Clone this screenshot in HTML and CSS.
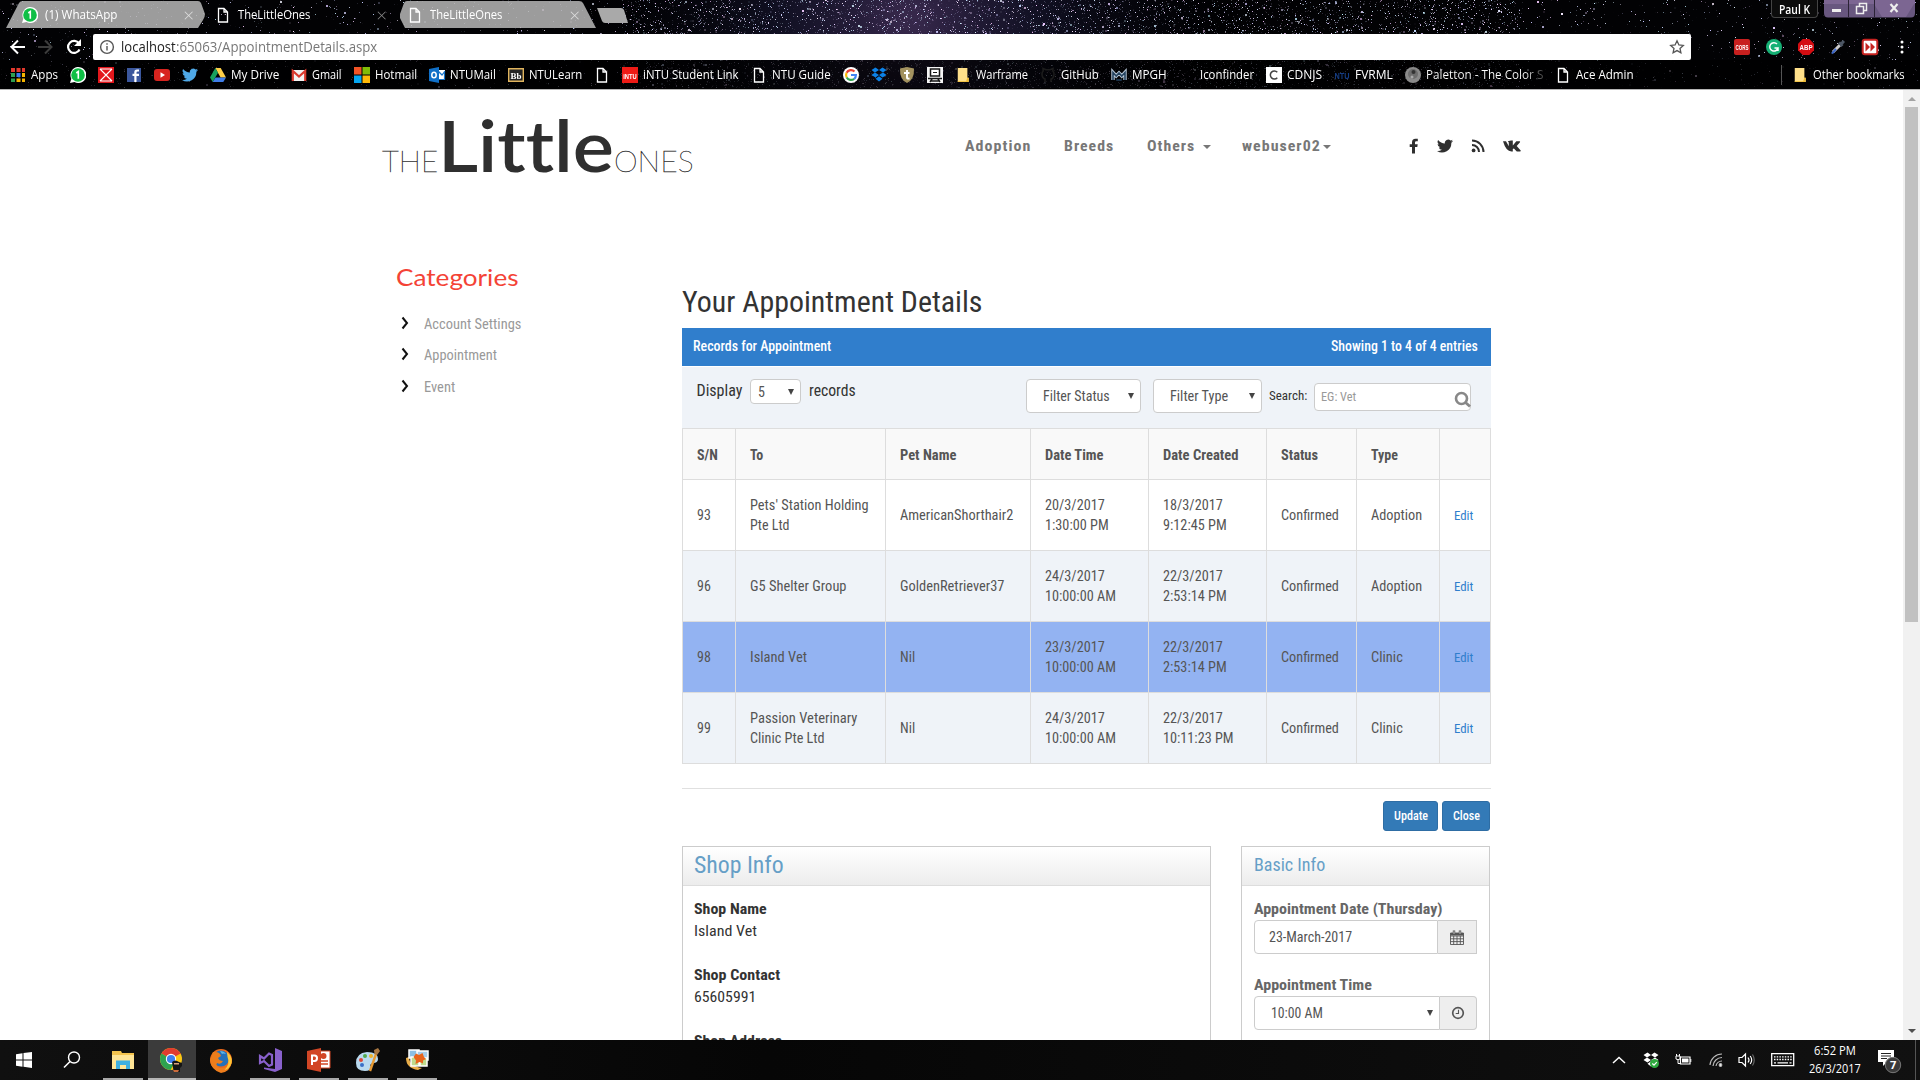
FILE: index.html
```html
<!DOCTYPE html>
<html lang="en">
<head>
<meta charset="utf-8">
<title>TheLittleOnes</title>
<link rel="stylesheet" href="styles.css">
</head>
<body>
<svg class="defs" width="0" height="0">
  <symbol id="file" viewBox="0 0 16 16"><path d="M3.500 1.500h5.500l3.500 3.500v10h-9zM9 1.500v3.500h3.500" fill="none" stroke="#fff" stroke-width="1.300"/></symbol>
  <symbol id="wa" viewBox="0 0 16 16"><path d="M0 16l1.300-4.300A8 8 0 1 1 4.500 15z" fill="#fff"/><circle cx="8" cy="8" r="6.800" fill="#0fbf45"/><path d="M6.300 6l2-1.500v7.200" fill="none" stroke="#fff" stroke-width="1.600"/></symbol>
  <symbol id="folder" viewBox="0 0 16 16"><path d="M2 0h11v11h1.500v5H2z" fill="#ffe08a"/><path d="M2 15h9.500l1.500-4h1.500v5H2z" fill="#f1bd35"/></symbol>
  <symbol id="dropbox" viewBox="0 0 16 16"><path d="M4.500.5L8 3 4 5.500.5 3zM11.500.5L8 3l4 2.500L15.500 3zM.5 8L4 5.500 8 8l-3.500 2.500zM15.500 8L12 5.500 8 8l3.500 2.500zM4.500 11.700L8 9.200l3.500 2.500L8 14.500z"/></symbol>
  <symbol id="twitter" viewBox="0 0 24 24"><path d="M24 4.600a10 10 0 0 1-2.800.8 5 5 0 0 0 2.200-2.700c-1 .6-2 1-3.100 1.200a4.900 4.900 0 0 0-8.400 4.500A14 14 0 0 1 1.700 3.100a4.900 4.900 0 0 0 1.500 6.600c-.8 0-1.600-.2-2.200-.6a4.900 4.900 0 0 0 3.900 4.900c-.7.200-1.500.2-2.200.1a4.900 4.900 0 0 0 4.600 3.400A9.900 9.900 0 0 1 0 19.500 14 14 0 0 0 21.500 7.100c1-.7 1.800-1.600 2.500-2.500z"/></symbol>
</svg>

<header class="chrome">
  <canvas class="stars" id="stars" width="1920" height="88"></canvas>
  <div class="tabs">
    <div class="tab t1">
      <svg class="shape" viewBox="0 0 200 28"><path d="M0 28L13 3Q14 1 17 1H192Q194 1 195 3L199 14Q199 17 197 20L192 28z"/></svg>
      <svg class="ico" width="16" height="16"><use href="#wa"/></svg><span class="ui" data-w="72">(1) WhatsApp</span><b>×</b>
    </div>
    <div class="tab t2">
      <svg class="ico" width="16" height="16"><use href="#file"/></svg><span class="ui" data-w="72">TheLittleOnes</span><b>×</b>
    </div>
    <div class="tab t3">
      <svg class="shape" viewBox="0 0 200 28"><path d="M6 28L1 18V14L5 3Q6 1 8 1H180Q183 1 184 3L197 28z"/></svg>
      <svg class="ico" width="16" height="16"><use href="#file"/></svg><span class="ui" data-w="72">TheLittleOnes</span><b>×</b>
    </div>
    <svg class="newtab" width="34" height="16"><path d="M1 0H25Q27 0 28 2L32 15H9Q7 15 6 13z"/></svg>
    <div class="winctl">
      <div class="user"><span class="ui" data-w="31">Paul K</span></div>
      <svg width="91" height="18" viewBox="0 0 91 18"><path d="M0 0H91V13Q91 17.500 87 17.500H4Q0 17.500 0 13z" fill="#68577f"/><path d="M0 0h91v4H0zM50 4h40l-8 13H58z" fill="#8d72a2" opacity=".55"/><path d="M24.500 0v17M50.500 0v17" stroke="#2b2336"/><path d="M8 10.500h9" stroke="#eee" stroke-width="3"/><path d="M32.500 6.500h7v7h-7zM35.500 6V3.500h7v7H40" fill="none" stroke="#eee" stroke-width="1.500"/><path d="M66.500 4l7 8M73.500 4l-7 8" stroke="#eee" stroke-width="2.200"/></svg>
    </div>
  </div>
  <div class="toolbar">
    <svg class="nav" width="84" height="26" viewBox="0 0 84 26"><g fill="none" stroke-width="2"><path d="M25 13H12M18 6.500L11.500 13 18 19.500" stroke="#fff"/><path d="M38 13H51M45 6.500L51.500 13 45 19.500" stroke="#3c3c3c"/><path d="M79 9.500A6 6 0 1 0 79.500 15.500" stroke="#fff" stroke-width="2.200"/></g><path d="M81 5v7h-7z" fill="#fff"/></svg>
    <div class="omni">
      <svg width="16" height="16" viewBox="0 0 16 16" fill="none" stroke="#555" stroke-width="1.400"><circle cx="8" cy="8" r="6.400"/><path d="M8 7v4.500M8 4.200v1.500"/></svg>
      <span class="ui host" data-w="55">localhost</span><span class="ui path" data-w="201">:65063/AppointmentDetails.aspx</span>
      <svg class="star" width="16" height="16" viewBox="0 0 16 16"><path d="M8 1.800l1.900 4.100 4.400.5-3.300 3 .9 4.400L8 11.600l-3.900 2.200.9-4.400-3.300-3 4.400-.5z" fill="none" stroke="#555" stroke-width="1.300"/></svg>
    </div>
    <div class="exts">
      <svg width="16" height="16"><rect width="16" height="16" rx="2" fill="#c8201f"/><text x="1.500" y="11" class="cors" textLength="13" lengthAdjust="spacingAndGlyphs">CORS</text></svg>
      <svg width="16" height="16"><circle cx="8" cy="8" r="8" fill="#15b074"/><path d="M11 5A4.200 4.200 0 1 0 12 9H8.500M12 9v3" fill="none" stroke="#fff" stroke-width="1.500"/></svg>
      <svg width="16" height="16"><path d="M4.700 0h6.600L16 4.700v6.600L11.300 16H4.700L0 11.300V4.700z" fill="#d40d12"/><text x="1.500" y="10.800" class="cors" textLength="13" lengthAdjust="spacingAndGlyphs">ABP</text></svg>
      <svg width="16" height="16"><path d="M10 6L3 13" stroke="#ccc" stroke-width="3"/><path d="M6 10l-4 4.500" stroke="#3d66c8" stroke-width="2"/><path d="M9 3.500l3.500 3.500M10.500 5.500L14 2" stroke="#4c5664" stroke-width="3"/></svg>
      <svg width="16" height="16"><rect x=".7" y=".7" width="14.600" height="14.600" rx="2" fill="#fff" stroke="#c62320" stroke-width="2"/><path d="M3.500 3.500v9L8 8zM8.500 3.500v9L13 8z" fill="#c62320"/></svg>
      <svg width="16" height="16" fill="#fff"><circle cx="8" cy="3" r="1.500"/><circle cx="8" cy="8" r="1.500"/><circle cx="8" cy="13" r="1.500"/></svg>
    </div>
  </div>
  <nav class="bookmarks ui">
    <a><svg width="16" height="16"><path fill="#e2392d" d="M1 1h4v4H1zM6.500 1h4v4h-4zM12 1h3v4h-3z"/><path fill="#2e9f51" d="M1 6h4v4H1zM1 11.500h4v3.500H1z"/><path fill="#3a7cf0" d="M6.500 6h4v4h-4z"/><path fill="#f4b400" d="M12 6h3v4h-3zM6.500 11.500h4v3.500h-4zM12 11.500h3v3.500h-3z"/></svg><span data-w="27">Apps</span></a>
    <a><svg width="16" height="16"><use href="#wa"/></svg></a>
    <a><svg width="16" height="16"><path d="M0 0h16v16H0z" fill="#e3171c"/><path d="M2 2l12 12M14 2L2 14M2 2h12M2 14h12" stroke="#fff" stroke-width="1.100"/></svg></a>
    <a><svg width="16" height="16"><rect x="1" y="1" width="14" height="14" fill="#3b579d"/><path d="M10.500 15V9H13V6.800h-2.500V5.500q0-1 1.200-1H13V2.500h-2Q8.300 2.500 8.300 5.200v1.600H6.500V9h1.800v6z" fill="#fff"/></svg></a>
    <a><svg width="16" height="16"><rect y="2" width="16" height="12" rx="3" fill="#d8241f"/><path d="M6.500 5.200v5.600L11 8z" fill="#fff"/></svg></a>
    <a><svg width="16" height="16" fill="#4fa9e8"><use href="#twitter"/></svg></a>
    <a><svg width="16" height="16"><path d="M5.300 1h5.400L16 10.500h-5.400z" fill="#ffcf48"/><path d="M5.300 1L8 5.700 2.700 15 0 10.500z" fill="#18a05e"/><path d="M5.500 10.500H16L13.300 15H2.700z" fill="#3f7de8"/></svg><span data-w="48">My Drive</span></a>
    <a><svg width="16" height="16"><path d="M1 3h14v11H1z" fill="#f2f2f2"/><path d="M1.800 14V4L8 9.500 14.200 4v10" fill="none" stroke="#d93a2f" stroke-width="2.200"/></svg><span data-w="30">Gmail</span></a>
    <a><svg width="16" height="16"><path fill="#f35325" d="M0 0h7.500v7.500H0z"/><path fill="#81bc06" d="M8.500 0H16v7.500H8.500z"/><path fill="#05a6f0" d="M0 8.500h7.500V16H0z"/><path fill="#ffba08" d="M8.500 8.500H16V16H8.500z"/></svg><span data-w="42">Hotmail</span></a>
    <a><svg width="16" height="16"><path d="M9 3h7v10H9z" fill="#fff"/><path d="M9 4l4 4 3-4M9.500 12.500h6V5" fill="none" stroke="#1673c9" stroke-width="1.200"/><path d="M0 2l10-2v16L0 14z" fill="#1070c8"/><ellipse cx="5" cy="8" rx="2.200" ry="2.800" fill="none" stroke="#fff" stroke-width="1.500"/></svg><span data-w="46">NTUMail</span></a>
    <a><svg width="16" height="16"><path d="M.7 1.700h14.600v12.600H.7z" fill="#222" stroke="#e0b45e" stroke-width="1.400"/><text x="2.500" y="11.500" class="bb" textLength="11" lengthAdjust="spacingAndGlyphs">Bb</text></svg><span data-w="53">NTULearn</span></a>
    <a><svg width="16" height="16"><use href="#file"/></svg></a>
    <a><svg width="16" height="16"><path d="M0 0h16v16H0z" fill="#ee1b16"/><text x="1.200" y="12" class="cors" textLength="13.500" lengthAdjust="spacingAndGlyphs">iNTU</text></svg><span data-w="96">iNTU Student Link</span></a>
    <a><svg width="16" height="16"><use href="#file"/></svg><span data-w="59">NTU Guide</span></a>
    <a><svg width="16" height="16"><circle cx="8" cy="8" r="8" fill="#fff"/><g fill="none" stroke-width="2.200"><path d="M11.500 4.500A5 5 0 0 0 3.600 5.800" stroke="#ea4335"/><path d="M3.600 5.800A5 5 0 0 0 3.700 10.500" stroke="#fbbc05"/><path d="M3.700 10.500A5 5 0 0 0 11.200 11.800" stroke="#34a853"/><path d="M11.200 11.800A5 5 0 0 0 12.900 8H8" stroke="#4285f4"/></g></svg></a>
    <a><svg width="16" height="16" fill="#0c82e8"><use href="#dropbox"/></svg></a>
    <a><svg width="16" height="16"><path d="M1 1.500L8 0l7 1.500q.5 11-7 14.500Q.5 12.500 1 1.500z" fill="#a3925f"/><path d="M8 3v7.500q0 1.500 2.500 1M5 6h5.500" stroke="#fff" stroke-width="2" fill="none"/></svg></a>
    <a><svg width="16" height="16"><path d="M0 0h16v16H0z" fill="#f5f5f5"/><path d="M3.500 2h9v7h-9z" fill="#fff" stroke="#161616" stroke-width="1.500"/><path d="M1 11.500h14M3 15l2-3M13 15l-2-3M4 14h8" fill="none" stroke="#161616" stroke-width="1.500"/><path d="M6 5.500h4" stroke="#161616"/></svg></a>
    <a><svg width="16" height="14"><use href="#folder"/></svg><span data-w="52">Warframe</span></a>
    <a><svg width="16" height="16"><path d="M5 15v-3q-3-1-3-5 0-2 1.200-3L3 1.500l3 1.300h4L13 1.500 12.800 4Q14 5 14 7q0 4-3 5v3" fill="none" stroke="#1c1c1c" stroke-width="1.600"/></svg><span data-w="38">GitHub</span></a>
    <a><svg width="16" height="16"><path d="M2 13V5.500L5.200 9 8 6l2.800 3L14 5.500V13" fill="none" stroke="#b8c8d8" stroke-width="3.400"/><path d="M2 13V5.500L5.200 9 8 6l2.800 3L14 5.500V13M5.200 13h5.600" fill="none" stroke="#24425e" stroke-width="1.600"/></svg><span data-w="35">MPGH</span></a>
    <a><svg width="16" height="16"></svg><span data-w="54">Iconfinder</span></a>
    <a><svg width="16" height="16"><path d="M0 0h16v16H0z" fill="#fff"/><path d="M11.300 5.300a4 4 0 1 0 0 5.400" fill="none" stroke="#444" stroke-width="1.500"/></svg><span data-w="35">CDNJS</span></a>
    <a><svg width="16" height="16"><text x=".5" y="12" class="ntu" textLength="15" lengthAdjust="spacingAndGlyphs">NTU</text></svg><span data-w="38">FVRML</span></a>
    <a><svg width="16" height="16"><circle cx="8" cy="8" r="8" fill="#8a8a8a"/><circle cx="8" cy="7" r="5" fill="#6d6d6d"/><circle cx="8.500" cy="5" r="2" fill="#333"/><circle cx="7" cy="10" r="1.500" fill="#aaa"/></svg><span class="fade" data-w="117">Paletton - The Color S</span></a>
    <a><svg width="16" height="16"><use href="#file"/></svg><span data-w="58">Ace Admin</span></a>
    <a class="other"><svg width="16" height="14"><use href="#folder"/></svg><span data-w="92">Other bookmarks</span></a>
  </nav>
</header>

<div class="view">
  <main class="page">
    <div class="top">
      <div class="logo"><span class="thin" data-w="56">THE</span><span class="big" data-w="176">Little</span><span class="thin" data-w="80">ONES</span></div>
      <nav class="menu">
        <a data-w="66">Adoption</a><i class="gap"></i><a data-w="50">Breeds</a><i class="gap"></i><a data-w="48">Others</a><i class="caret c1"></i><a data-w="79">webuser02</a><i class="caret c2"></i>
      </nav>
      <div class="social">
        <svg width="10" height="16" viewBox="0 0 10 16"><path d="M3 15.500V9H.7V6.300H3V4.500Q3 .8 6.500.8h2.300v2.500H7.200Q6 3.300 6 4.500v1.800h2.700L8.300 9H6v6.500z"/></svg>
        <svg width="16" height="16"><use href="#twitter"/></svg>
        <svg width="14" height="14" viewBox="0 0 14 14"><circle cx="2.600" cy="11.400" r="1.900"/><path d="M1 6A7 7 0 0 1 8 13M1 1.500A11.500 11.500 0 0 1 12.500 13" fill="none" stroke="#2f2f2f" stroke-width="2"/></svg>
        <svg width="18" height="12" viewBox="0 0 18 12"><path d="M0 1.200h3l2.800 5V2.400L4.800 1.200 8 .6h1.800v4.800l3.500-4.200h3.500q.7.200 0 1.300L13.700 6l4 4.500q.3.800-.5.900h-3.400l-2.900-3L9.800 9v2.400H8.600Q3 11.500 0 1.200z"/></svg>
      </div>
    </div>
    <div class="cols">
      <aside class="side">
        <h3><span data-w="122">Categories</span></h3>
        <a><svg width="8" height="14"><path d="M1.500 1.500L6 7l-4.500 5.500"/></svg><span data-w="97">Account Settings</span></a>
        <a><svg width="8" height="14"><path d="M1.500 1.500L6 7l-4.500 5.500"/></svg><span data-w="73">Appointment</span></a>
        <a><svg width="8" height="14"><path d="M1.500 1.500L6 7l-4.500 5.500"/></svg><span data-w="31">Event</span></a>
      </aside>
      <section class="content">
        <h2><span data-w="300">Your Appointment Details</span></h2>
        <div class="bar"><span data-w="138">Records for Appointment</span><span data-w="147">Showing 1 to 4 of 4 entries</span></div>
        <div class="filters">
          <span class="lbl" data-w="46">Display</span>
          <div class="sel s5"><span data-w="7">5</span><i></i></div>
          <span class="lbl" data-w="47">records</span>
          <div class="right">
            <div class="sel f1"><span data-w="67">Filter Status</span><i></i></div>
            <div class="sel f2"><span data-w="58">Filter Type</span><i></i></div>
            <span class="slabel" data-w="38">Search:</span>
            <div class="search"><span data-w="35">EG: Vet</span><svg width="17" height="17" viewBox="0 0 17 17"><circle cx="7.500" cy="7.500" r="5.500" fill="none" stroke="#888" stroke-width="2.600"/><path d="M11.500 11.500l4.500 4" stroke="#888" stroke-width="2.800"/></svg></div>
          </div>
        </div>
        <table>
          <colgroup><col class="w1"><col class="w2"><col class="w3"><col class="w4"><col class="w4"><col class="w5"><col class="w6"><col class="w7"></colgroup>
          <tr class="head"><th><span data-w="21">S/N</span></th><th><span data-w="13">To</span></th><th><span data-w="56">Pet Name</span></th><th><span data-w="59">Date Time</span></th><th><span data-w="75">Date Created</span></th><th><span data-w="37">Status</span></th><th><span data-w="27">Type</span></th><th></th></tr>
          <tr><td><span data-w="14">93</span></td><td><span data-w="119">Pets' Station Holding</span><br><span data-w="40">Pte Ltd</span></td><td><span data-w="113">AmericanShorthair2</span></td><td><span data-w="60">20/3/2017</span><br><span data-w="64">1:30:00 PM</span></td><td><span data-w="60">18/3/2017</span><br><span data-w="64">9:12:45 PM</span></td><td><span data-w="58">Confirmed</span></td><td><span data-w="51">Adoption</span></td><td><a data-w="19">Edit</a></td></tr>
          <tr class="alt"><td><span data-w="14">96</span></td><td><span data-w="96">G5 Shelter Group</span></td><td><span data-w="104">GoldenRetriever37</span></td><td><span data-w="60">24/3/2017</span><br><span data-w="71">10:00:00 AM</span></td><td><span data-w="60">22/3/2017</span><br><span data-w="64">2:53:14 PM</span></td><td><span data-w="58">Confirmed</span></td><td><span data-w="51">Adoption</span></td><td><a data-w="19">Edit</a></td></tr>
          <tr class="on"><td><span data-w="14">98</span></td><td><span data-w="57">Island Vet</span></td><td><span data-w="15">Nil</span></td><td><span data-w="60">23/3/2017</span><br><span data-w="71">10:00:00 AM</span></td><td><span data-w="60">22/3/2017</span><br><span data-w="64">2:53:14 PM</span></td><td><span data-w="58">Confirmed</span></td><td><span data-w="32">Clinic</span></td><td><a data-w="19">Edit</a></td></tr>
          <tr class="alt"><td><span data-w="14">99</span></td><td><span data-w="107">Passion Veterinary</span><br><span data-w="75">Clinic Pte Ltd</span></td><td><span data-w="15">Nil</span></td><td><span data-w="60">24/3/2017</span><br><span data-w="71">10:00:00 AM</span></td><td><span data-w="60">22/3/2017</span><br><span data-w="71">10:11:23 PM</span></td><td><span data-w="58">Confirmed</span></td><td><span data-w="32">Clinic</span></td><td><a data-w="19">Edit</a></td></tr>
        </table>
        <hr>
        <div class="actions"><button class="b1"><span data-w="34">Update</span></button><button class="b2"><span data-w="27">Close</span></button></div>
        <div class="panels">
          <div class="panel shop">
            <h4><span data-w="90">Shop Info</span></h4>
            <dl>
              <dt><span data-w="73">Shop Name</span></dt><dd><span data-w="63">Island Vet</span></dd>
              <dt><span data-w="86">Shop Contact</span></dt><dd><span data-w="62">65605991</span></dd>
              <dt><span data-w="88">Shop Address</span></dt>
            </dl>
          </div>
          <div class="panel basic">
            <h5><span data-w="71">Basic Info</span></h5>
            <label><span data-w="189">Appointment Date (Thursday)</span></label>
            <div class="group date"><div class="field"><span data-w="83">23-March-2017</span></div><div class="addon"><svg width="14" height="15" viewBox="0 0 14 15"><path d="M.5 3h13v11.500H.5zM.5 6h13M.5 8.800h13M.5 11.600h13M3.700 6v8.500M7 6v8.500M10.300 6v8.500" fill="none" stroke="#555" stroke-width=".9"/><path d="M.5 3h13v2.500H.5z" fill="#555"/><path d="M4 .5v4M10 .5v4" stroke="#555" stroke-width="2.400"/><path d="M4 1.300v2.500M10 1.300v2.500" stroke="#ddd" stroke-width=".9"/></svg></div></div>
            <label><span data-w="118">Appointment Time</span></label>
            <div class="group time"><div class="field"><span data-w="52">10:00 AM</span><i></i></div><div class="addon"><svg width="14" height="14" viewBox="0 0 14 14"><circle cx="7" cy="7" r="5.300" fill="none" stroke="#555" stroke-width="1.700"/><path d="M7.500 3.800V7.500H4.700" fill="none" stroke="#555" stroke-width="1.100"/></svg></div></div>
          </div>
        </div>
      </section>
    </div>
  </main>
  <div class="scroll"><i class="up"></i><div class="thumb"></div><i class="down"></i></div>
</div>

<footer class="taskbar">
  <div class="apps">
    <div class="app"><svg width="16" height="16" fill="#fff"><path d="M0 2.300L6.500 1.300v6.300H0zM7.500 1.100L16 0v7.600H7.500zM0 8.500h6.500v6.200L0 13.800zM7.500 8.500H16V16l-8.500-1.200z"/></svg></div>
    <div class="app find"><svg width="18" height="18" fill="none" stroke="#fff"><circle cx="11" cy="6.500" r="5.500" stroke-width="1.400"/><path d="M7 10.500L1 16.500" stroke-width="1.600"/></svg></div>
    <div class="app run"><svg width="22" height="20"><path d="M0 1h9l1 2h12v15H0z" fill="#f4c44e"/><path d="M0 5h22v14H0z" fill="#ffe596"/><path d="M4 19v-8.500h14V19h-4v-4H8v4z" fill="#3fb0e0"/></svg></div>
    <div class="app cur"><svg width="24" height="26" viewBox="0 0 24 26"><circle cx="11" cy="12" r="11" fill="#fbc714"/><path d="M11 12L1.500 6.500A11 11 0 0 1 20.500 6.500z" fill="#e13c30"/><path d="M11 12L1.500 6.500A11 11 0 0 0 10.500 23l5-9z" fill="#2ea24f"/><path d="M11 6.500h9.500" stroke="#e13c30" stroke-width="1"/><circle cx="11" cy="12" r="5.200" fill="#fff"/><circle cx="11" cy="12" r="4.100" fill="#3e80ee"/><path d="M12 15q3-3 7 0l3 1v3l-2 2v4h-6l-1-4z" fill="#151515"/><path d="M14 16h5v1.500h-5z" fill="#d9a07b"/><path d="M13 23h6l-1 2h-4z" fill="#c96b3c"/></svg></div>
    <div class="app"><svg width="22" height="22"><circle cx="11" cy="11" r="11" fill="#ed6a1b"/><circle cx="11" cy="9.500" r="8" fill="#2471b9"/><path d="M5 3q5 0 6 4l-3 2q1 3 5 3-2 4-6 2-2 3 3 5 8 1 9-7 1-4-2-8 5 4 5 9-2 10-11 11Q1 21 0 11q1-3 2-4 0-2 1-4z" fill="#ee7d1c"/><path d="M17 3q6 5 4.500 11-2 6-7 7 6-6 3-13z" fill="#fdc637"/><path d="M10 2q4 0 6 3-3-1-4 0z" fill="#5cb5e5"/></svg></div>
    <div class="app run"><svg width="24" height="24"><path d="M17 0l7 3v18l-7 3L6 21v-1.500l11 1.500z" fill="#8961cc"/><path d="M2 8v7l4-2 5 5 3-1.500V7l-3-1.500-5 5z" fill="none" stroke="#8961cc" stroke-width="2.200"/></svg></div>
    <div class="app run"><svg width="24" height="24"><path d="M12 3h11v17H12z" fill="#fff" stroke="#d24625"/><circle cx="16.500" cy="8" r="3" fill="#d24625"/><path d="M14 13h7M14 16h7" stroke="#d24625" stroke-width="1.500"/><path d="M0 3l14-3v24L0 21z" fill="#d24625"/><path d="M5 17V7.500h2.500q2.500 0 2.500 2.700T7.500 13H5" fill="none" stroke="#fff" stroke-width="2"/></svg></div>
    <div class="app run"><svg width="26" height="24"><path d="M1 15Q1 5 12 4q11 0 11 7 0 4-5 4-4 1-2 4 0 4-6 4-9 0-9-8z" fill="#b9d9ef"/><circle cx="6" cy="12" r="2" fill="#dc4936"/><circle cx="10" cy="8" r="2" fill="#51a94c"/><circle cx="16" cy="8" r="2" fill="#efb32a"/><circle cx="7" cy="17" r="2" fill="#3a6fc7"/><path d="M15 23L21 6" stroke="#e79a33" stroke-width="2.400"/><path d="M19.500 6L19 2l4-2 2 3-3 4z" fill="#a87742"/></svg></div>
    <div class="app run"><svg width="24" height="22"><path d="M1 9q0 10 12 12l4-2Q4 17 4 8z" fill="#e9ae4a"/><path d="M4 1h10v8H4z" fill="#8cc0e4" stroke="#fff" stroke-width="1.500"/><path d="M12 2h11v9H12z" fill="#a8cdea" stroke="#fff" stroke-width="1.500"/><path d="M6 8h9v9H6zM14 9h8v8h-8z" fill="#bedb8d" stroke="#fff" stroke-width="1.500"/><path d="M8.500 8l2.500-3.500 3 1.500 3.500-2 1.500 4 2 2-3 1.500v3l-3.500-1.500-4 2 .5-3.500z" fill="#e8641c"/></svg></div>
  </div>
  <div class="tray">
    <svg class="y1" width="14" height="8"><path d="M1 7l6-5.500L13 7" fill="none" stroke="#fff" stroke-width="1.500"/></svg>
    <svg class="y2" width="16" height="16" fill="#fff"><use href="#dropbox"/><circle cx="11.500" cy="11.500" r="4.500" fill="#2faa3f"/><path d="M9.300 11.500l1.700 1.600 2.800-3" fill="none" stroke="#fff" stroke-width="1.200"/></svg>
    <svg class="y3" width="17" height="14" fill="none" stroke="#fff"><path d="M5.500 4h9.500v7H5.500z" stroke-width="1.200"/><path d="M7 5.500h6.500v4H7z" fill="#fff" stroke="none"/><path d="M15.800 6v3M1 3h4v3q-2 1.500-4 0zM1.500 1v2M4.500 1v2M3 7v3.500h2"/></svg>
    <svg class="y4" width="14" height="14" fill="none" stroke="#bbb" stroke-width="1.200"><path d="M1 12A12 12 0 0 1 13 1M4 13A9 9 0 0 1 13 4.500M7 13A6 6 0 0 1 13 8"/><circle cx="11.500" cy="12" r="1.300" fill="#fff"/></svg>
    <svg class="y5" width="17" height="14" fill="none" stroke="#fff" stroke-width="1.200"><path d="M1 4.500h3L7.500 1v12L4 9.500H1zM10 4.500q2 2.500 0 5M12.200 3q3 4 0 8"/><path d="M14.500 1.500q3.500 5.500 0 11" stroke="#666"/></svg>
    <svg class="y6" width="24" height="14" fill="none" stroke="#fff"><path d="M.7.700h22v12h-22z" stroke-width="1.300"/><path d="M3 3.800h18M3 6.500h18" stroke-dasharray="1.500 1.200" stroke-width="1.300"/><path d="M3 9.800h2M6.500 9.800h10.500M18.500 9.800h2" stroke-width="1.300"/></svg>
    <div class="clock ui"><span data-w="42">6:52 PM</span><span data-w="52">26/3/2017</span></div>
    <svg class="y7" width="26" height="26"><path d="M1 1h16v12h-7l-4 4v-4H1z" fill="#fff"/><path d="M4 4.500h10M4 7h10M4 9.500h6" stroke="#222"/><circle cx="16" cy="16" r="7.700" fill="#3a3a3a" stroke="#777"/><text x="13" y="20" class="seven">7</text></svg>
  </div>
</footer>
<script src="script.js"></script>
</body>
</html>
```
FILE: styles.css
```css
* { box-sizing: border-box; }
body { margin: 0; width: 1920px; height: 1080px; overflow: hidden; background: #fff; display: flex; flex-direction: column; font-family: "Roboto Condensed", Roboto, sans-serif; font-size: 14px; line-height: 20px; color: #555; }
.defs { position: absolute; }
svg { flex: none; display: block; overflow: visible; }
[data-w] { display: inline-block; white-space: nowrap; transform-origin: 0 50%; flex: none; }
.ui { font-family: "Open Sans", "Noto Sans", sans-serif; font-size: 12px; }

/* browser frame */
.chrome { position: relative; height: 90px; background: #020204; border-bottom: 1px solid #b5b5b5; flex: none; display: flex; flex-direction: column; color: #fff; }
.stars { position: absolute; left: 0; top: 0; }
.tabs { height: 34px; display: flex; align-items: flex-start; position: relative; }
.tab { position: relative; height: 28px; display: flex; align-items: center; padding-top: 2px; }
.tab .shape { position: absolute; left: 0; top: 0; width: 200px; height: 28px; fill: #b2b2b2; fill-opacity: .88; }
.tab .ico, .tab span, .tab b { position: relative; }
.tab b { font: 300 19px/20px "Open Sans", sans-serif; color: #ddd; margin-left: auto; }
.tab .ico { margin-right: 7px; }
.t1 { margin-left: 6px; width: 199px; padding-left: 16px; padding-right: 11px; }
.t2 { width: 194px; padding-left: 10px; padding-right: 12px; }
.t3 { width: 197px; padding-left: 8px; padding-right: 16px; }
.t2 b { color: #888; }
.newtab { margin-top: 8px; fill: #a9a9a9; }
.winctl { margin-left: auto; margin-right: 5px; display: flex; gap: 6px; }
.user { width: 47px; height: 18px; border: 1px solid #444; border-top: 0; border-radius: 0 0 4px 4px; padding-left: 7px; line-height: 18px; background: #0c0c0c; font-weight: 600; }
.toolbar { height: 26px; position: relative; display: flex; align-items: center; }
.omni { margin-left: 9px; width: 1598px; height: 26px; background: #fff; border-radius: 2px; display: flex; align-items: center; padding: 0 6px; }
.omni span { font-size: 14px; }
.host { color: #222; margin-left: 6px; }
.path { color: #777; }
.star { margin-left: auto; }
.exts { display: flex; gap: 16px; margin-left: 43px; }
.cors { font: 700 6.5px "Liberation Sans", sans-serif; fill: #fff; }
.bb { font: 700 9px "Liberation Serif", serif; fill: #fff; }
.ntu { font: 700 9px "Liberation Sans", sans-serif; fill: #143d85; }
.bookmarks { position: relative; height: 29px; background: rgba(0,0,0,.72); display: flex; align-items: center; gap: 12px; padding: 1px 15px 0 10px; }
.bookmarks a { display: flex; align-items: center; gap: 5px; }
.fade { color: transparent; background: linear-gradient(90deg, #fff 84%, #555 97%); -webkit-background-clip: text; background-clip: text; }
.bookmarks .other { margin-left: auto; border-left: 1px solid #555; padding-left: 10px; }

/* page */
.view { height: 950px; flex: none; display: flex; overflow: hidden; }
.page { width: 1903px; height: 950px; overflow: hidden; }
.top { height: 140px; display: flex; padding-left: 382px; }
.logo { display: flex; align-items: baseline; height: 111px; width: 583px; font-family: Lato, sans-serif; color: #2f2f2f; line-height: 109px; font-variant-ligatures: none; }
.thin { font-size: 29px; font-weight: 100; -webkit-text-stroke: .35px #2f2f2f; }
.big { font-size: 71px; font-weight: 600; }
.menu { display: flex; align-items: center; height: 112px; font-size: 15.5px; font-weight: 700; color: #777; }
.menu a { letter-spacing: 1px; }
.gap { width: 33px; }
.caret { border: 4px solid transparent; border-top-color: #777; border-bottom: 0; }
.c1 { margin: 2px 31px 0 8px; }
.c2 { margin: 2px 0 0 2px; }
.social { display: flex; align-items: center; height: 112px; margin-left: 78px; gap: 18px; fill: #2f2f2f; }
.cols { display: flex; }
.side { width: 286px; margin-left: 396px; padding-top: 31px; }
.side h3 { margin: 0 0 15px; font: 400 24px/32px Lato, sans-serif; color: #f44336; }
.side a { display: flex; align-items: center; height: 31.5px; color: #999; padding-left: 5px; gap: 15px; }
.side a svg { margin-top: -2px; fill: none; stroke: #111; stroke-width: 2; }
.content { width: 809px; padding-top: 52px; }
h2 { margin: 0; height: 46px; font-size: 30px; font-weight: 400; line-height: 40px; color: #333; }
.bar { height: 38px; background: #307ecc; color: #fff; font-weight: 500; display: flex; justify-content: space-between; padding: 8px 13px 0 11px; }
.filters { margin-top: 1px; height: 61px; background: #eff3f8; display: flex; padding: 12px 20px 0 14.5px; }
.lbl { font-size: 16px; line-height: 24px; color: #333; }
.sel, .field { border: 1px solid #ccc; border-radius: 4px; background: #fff; display: flex; align-items: center; justify-content: space-between; }
.sel i, .field i { border: 3px solid transparent; border-top: 6px solid #444; border-bottom: 0; }
.s5 { width: 51px; height: 25px; margin: 0 8px 0 7.5px; padding: 0 6px 0 7px; }
.right { display: flex; margin-left: auto; }
.f1 { width: 115px; height: 34px; padding: 0 6px 0 16px; margin-right: 12px; }
.f2 { width: 109px; height: 34px; padding: 0 6px 0 16px; margin-right: 7px; }
.slabel { color: #333; font-size: 13px; line-height: 34px; }
.search { width: 157px; height: 28px; margin: 4px 0 0 7px; border: 1px solid #ccc; border-radius: 4px; background: #fff; display: flex; justify-content: space-between; padding: 3px 0 0 6px; color: #999; font-size: 13px; }
.search svg { margin: 4px -1px 0 0; }
table { width: 809px; table-layout: fixed; border-collapse: collapse; }
.w1 { width: 53px; } .w2 { width: 150px; } .w3 { width: 145px; } .w4 { width: 118px; } .w5 { width: 90px; } .w6 { width: 83px; } .w7 { width: 51px; }
th, td { border: 1px solid #ddd; padding: 0 0 0 14px; text-align: left; height: 71px; line-height: 20px; }
td br + span, td span, th span, td a { vertical-align: top; }
.head th { height: 51px; background: #f9f9f9; padding-top: 1px; }
.alt { background: #eff3f8; }
.on { background: #93b3f2; }
td a { color: #307ecc; font-size: 13.5px; }
hr { margin: 24px 0 12px; border: 0; height: 1px; background: #e0e0e0; }
.actions { display: flex; justify-content: flex-end; gap: 4px; padding-right: 1px; }
button { height: 30px; border: 1px solid #2e6da4; border-radius: 3px; background: #337ab7; color: #fff; font: 500 12.5px/18px "Roboto Condensed", Roboto, sans-serif; padding: 0 10px; text-align: left; }
.b1 { width: 55px; } .b2 { width: 48px; }
.panels { display: flex; gap: 30px; margin-top: 15px; }
.panel { border: 1px solid #ccc; height: 260px; }
.shop { width: 529px; } .basic { width: 249px; }
h4, h5 { margin: 0; height: 39px; border-bottom: 1px solid #ddd; background: linear-gradient(#fff, #ececec); padding-left: 12px; font-weight: 400; color: #669fc7; }
h4 { font-size: 23.5px; line-height: 37px; padding-left: 11px; }
h5 { font-size: 18px; line-height: 36px; }
dl { margin: 0; padding: 12px 11px 0; font-size: 15.5px; line-height: 22px; color: #333; }
dt { font-weight: 700; }
dd { margin: 0 0 22px; }
label { display: block; font-size: 15.5px; font-weight: 700; color: #666; line-height: 22px; padding-left: 12px; margin-top: 12px; }
.group { display: flex; margin-left: 12px; width: 223px; height: 34px; }
.date + label { margin-top: 20px; }
.field { border-radius: 4px 0 0 4px; padding: 0 6px 0 14px; }
.date .field { width: 184px; } .time .field { width: 186px; padding-left: 16px; }
.addon { flex: 1; background: #eee; border: 1px solid #ccc; border-left: 0; display: flex; align-items: center; justify-content: center; }
.time .addon { border-radius: 0 4px 4px 0; }
.scroll { width: 17px; background: #f1f1f1; display: flex; flex-direction: column; align-items: center; }
.scroll i { border: 4px solid transparent; }
.scroll .up { border-top: 0; border-bottom-color: #a3a3a3; margin: 7px 0 6px; }
.scroll .down { border-bottom: 0; border-top-color: #505050; margin: auto 0 7px; }
.thumb { width: 13px; height: 515px; background: #c1c1c1; }

/* taskbar */
.taskbar { height: 40px; flex: none; background: linear-gradient(90deg, #101010, #060606 40%, #111); display: flex; justify-content: space-between; }
.apps { display: flex; }
.app { width: 48px; height: 40px; margin-right: 1px; display: flex; align-items: center; justify-content: center; border: solid transparent; border-width: 0 4px; }
.app:first-child { margin-right: 0; }
.find { margin-right: 3px; }
.run { background: linear-gradient(#a9a9a9, #a9a9a9) 0 38px / 100% 2px no-repeat padding-box; }
.cur { border: 0; background: linear-gradient(#b5b5b5, #b5b5b5) 0 38px / 100% 2px no-repeat, #3b3b3b; }
.tray { display: flex; align-items: center; padding-right: 12px; border-right: 1px solid #555; margin-right: 4px; }
.y2 { margin-left: 17px; } .y3 { margin-left: 16px; } .y4 { margin-left: 17px; } .y5 { margin-left: 15px; } .y6 { margin-left: 16px; }
.clock { display: flex; flex-direction: column; align-items: center; margin-left: 14px; color: #fff; line-height: 18px; }
.y7 { margin-left: 16px; margin-top: 4px; }
.seven { font: 700 11px "Open Sans", sans-serif; fill: #fff; }
```
FILE: script.js
```js
document.fonts.ready.then(function () {
  document.querySelectorAll('[data-w]').forEach(function (el) {
    var w = +el.dataset.w, n = el.offsetWidth;
    el.style.width = n + 'px';
    el.style.marginRight = (w - n) + 'px';
    el.style.transform = 'scaleX(' + (w / n) + ')';
  });
});

// Starfield theme behind the tab strip.
(function () {
  var c = document.getElementById('stars').getContext('2d'), s = 7;
  function r() { s = (s * 16807) % 2147483647; return s / 2147483647; }
  var g = c.createRadialGradient(910, 20, 10, 910, 20, 330);
  g.addColorStop(0, 'rgba(82,60,112,.65)');
  g.addColorStop(.4, 'rgba(35,34,75,.4)');
  g.addColorStop(1, 'rgba(0,0,0,0)');
  c.fillStyle = g;
  c.fillRect(0, 0, 1920, 88);
  for (var i = 0; i < 14000; i++) {
    var x = i % 3 ? 620 + r() * 900 : r() * 1920, y = r() * 88, a = Math.pow(r(), 2.4), z = r() > .95 ? 2 : 1;
    c.fillStyle = 'rgba(' + (190 + r() * 65 | 0) + ',' + (195 + r() * 50 | 0) + ',255,' + a + ')';
    c.fillRect(x | 0, y | 0, z, z);
  }
})();
```
